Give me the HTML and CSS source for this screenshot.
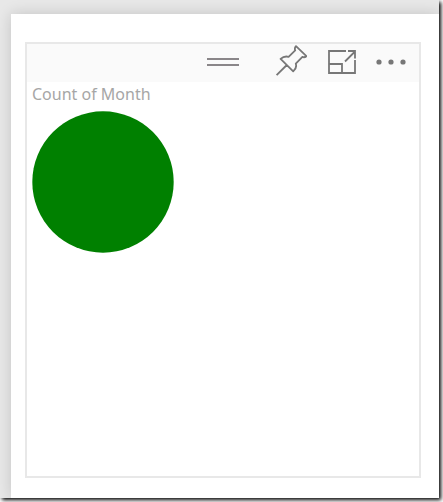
FILE: index.html
```html
<!DOCTYPE html>
<html lang="en">
<head>
<meta charset="utf-8">
<title>Count of Month</title>
<link rel="stylesheet" href="styles.css">
</head>
<body>
<div class="canvas">
  <main class="page">
    <section class="tile">
      <header class="toolbar">
        <button class="tool" type="button" aria-label="Move">
          <svg width="32" height="32" viewBox="0 0 32 32"><path d="M0 15h32M0 21h32" stroke="#8a8689" stroke-width="2"/></svg>
        </button>
        <div class="actions">
          <button class="tool" type="button" aria-label="Pin visual">
            <svg width="32" height="32" viewBox="-1 0 32 32" fill="none" stroke="#777" stroke-width="1.8" stroke-linejoin="round"><path d="M0.6 31.2 10.8 21M20 2.2 30.4 12.2Q28.5 13.8 26.4 12.9L19.8 19.7Q21.2 24 17.2 27.4L4.6 14.9Q8.2 11.6 12.6 12.8L19.2 6.4Q18.2 4.2 20 2.2Z"/></svg>
          </button>
          <button class="tool" type="button" aria-label="Focus mode">
            <svg width="32" height="32" viewBox="-1 0 32 32" fill="none" stroke="#777" stroke-width="1.8"><path d="M20 7H3v22h26V16M3 20h13v9M19 17.5 29 7.5M22 7h7v7.500"/></svg>
          </button>
          <button class="tool" type="button" aria-label="More options">
            <svg width="32" height="32" viewBox="0 0 32 32" fill="#777"><circle cx="4" cy="18" r="2.6"/><circle cx="16" cy="18" r="2.6"/><circle cx="28" cy="18" r="2.6"/></svg>
          </button>
        </div>
      </header>
      <div class="visual">
        <h1 class="title">Count of Month</h1>
        <svg class="chart" viewBox="0 0 142 142" role="img" aria-label="Count of Month"><circle cx="71" cy="71" r="70.7" fill="#008000"/></svg>
      </div>
    </section>
  </main>
</div>
</body>
</html>
```
FILE: styles.css
```css
* {
  box-sizing: border-box;
}

body {
  margin: 0;
  min-height: 100vh;
  display: flex;
  padding: 0 4px 4px 0;
  background: #fff;
  overflow: hidden;
}

.canvas {
  flex: 1;
  display: flex;
  padding: 14px 0 0 11px;
  background: #e8e8e8;
  box-shadow: 2px 2px 4px #000;
  clip-path: inset(0 -4px -4px 0);
}

.page {
  flex: 1;
  display: flex;
  padding: 28px 18px 20px 14px;
  background: #fff;
  box-shadow: 0 0 14px rgba(0, 0, 0, 0.16);
  clip-path: inset(-14px 0 0 -11px);
}

.tile {
  flex: 1;
  border: 2px solid #e8e8e8;
}

.toolbar {
  display: grid;
  grid-template-columns: 1fr auto 1fr;
  height: 38px;
  background: #fafafa;
}

.toolbar > .tool {
  grid-column: 2;
}

.actions {
  display: flex;
  justify-content: flex-end;
  gap: 18px;
  margin-right: 12px;
}

.tool {
  display: block;
  height: 32px;
  padding: 0;
  border: 0;
  background: none;
}

.tool svg {
  display: block;
}

.visual {
  padding: 0 5px;
}

.title {
  margin: 0 0 5px;
  font: 400 16px/24px "Noto Sans", "Open Sans", sans-serif;
  color: #a6a6a6;
}

.chart {
  display: block;
  width: 142px;
}
```
